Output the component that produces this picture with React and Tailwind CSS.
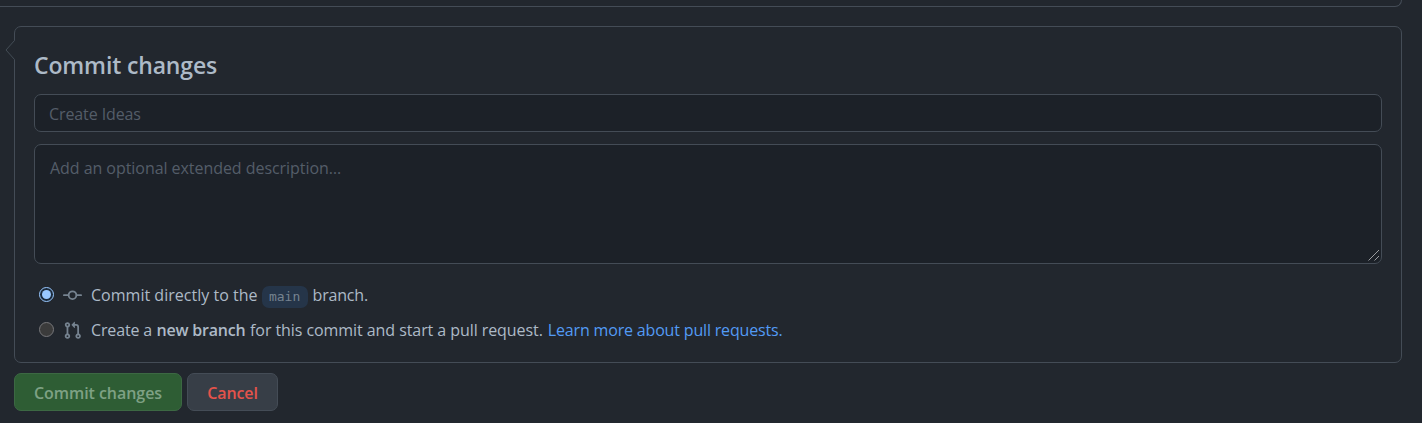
function CommitIcon() {
  return (
    <svg viewBox="0 0 16 16" className="h-[19px] w-[19px] shrink-0 fill-none stroke-[#768390]" strokeWidth="1.5" strokeLinecap="round" aria-hidden="true">
      <circle cx="8" cy="7.75" r="3.25" />
      <path d="M0.75 7.75H4.5M11.5 7.75H15.25" />
    </svg>
  );
}

function PullRequestIcon() {
  return (
    <svg viewBox="0 0 16 16" className="h-[19px] w-[19px] shrink-0 fill-[#768390]" aria-hidden="true">
      <path fillRule="evenodd" d="M7.177 3.073L9.573.677A.25.25 0 0110 .854v4.792a.25.25 0 01-.427.177L7.177 3.427a.25.25 0 010-.354zM3.75 2.5a.75.75 0 100 1.5.75.75 0 000-1.5zm-2.25.75a2.25 2.25 0 113 2.122v5.256a2.251 2.251 0 11-1.5 0V5.372A2.25 2.25 0 011.5 3.25zM11 2.5h-1V4h1a1 1 0 011 1v5.628a2.251 2.251 0 101.5 0V5A2.5 2.5 0 0011 2.5zm1 10.25a.75.75 0 111.5 0 .75.75 0 01-1.5 0zM3.75 12a.75.75 0 100 1.5.75.75 0 000-1.5z" />
    </svg>
  );
}

function Radio({ checked }) {
  return (
    <span
      role="radio"
      aria-checked={checked}
      className={
        checked
          ? "mb-[2px] flex h-[15px] w-[15px] shrink-0 items-center justify-center rounded-full border-[1.5px] border-[#99c8ff] bg-[#1c2b3c]"
          : "mb-[2px] flex h-[15px] w-[15px] shrink-0 rounded-full border-[1.5px] border-[#77777a] bg-[#3b3b3b]"
      }
    >
      {checked && <span className="h-[9px] w-[9px] rounded-full bg-[#99c8ff]" />}
    </span>
  );
}

export default function App() {
  return (
    <div className="h-[423px] overflow-hidden bg-[#22272e] font-['Open_Sans','Noto_Sans',sans-serif] text-[16px] text-[#adbac7]">
      <div className="mr-5 h-[7px] rounded-br-[7px] border-r border-b border-[#444c56]" />

      <section className="relative mt-[19px] mr-5 ml-[14px] h-[337px] rounded-[7px] border border-[#444c56] px-[19px] pt-[22px]">
        <svg viewBox="0 0 10 20" className="absolute top-[13px] -left-[10px] h-5 w-[10px]" aria-hidden="true">
          <path d="M10 0 L1 10 L10 20" className="fill-[#22272e]" />
          <path d="M9.5 0.5 L1 10 L9.5 19.5" className="fill-none stroke-[#444c56]" />
        </svg>
        <h3 className="flex h-8 items-center text-[23px] font-semibold tracking-[-0.15px] whitespace-nowrap"><span>Commit changes</span></h3>
        <div className="mt-[13px] flex h-[38px] items-center rounded-[7px] border border-[#444c56] bg-[#1c2128] px-[15px] pt-[2px] text-[#545d68]">
          <span className="-ml-px tracking-[-0.1px]">Create Ideas</span>
        </div>
        <div className="relative mt-3 h-[120px] rounded-[7px] border border-[#444c56] bg-[#1c2128] px-[15px] pt-[11px] leading-6 text-[#545d68]">
          <span className="tracking-[-0.05px]">Add an optional extended description…</span>
          <svg viewBox="0 0 12 12" className="absolute right-px bottom-[2px] h-3 w-3 fill-none stroke-[#9b9da0]" aria-hidden="true">
            <path d="M0.5 11.5 L11 1 M6.5 11.5 L11 7" />
          </svg>
        </div>
        <div className="mt-[18px] flex h-[26px] items-center pl-[4.5px] whitespace-nowrap">
          <Radio checked />
          <span className="ml-[9px] flex"><CommitIcon /></span>
          <span className="ml-[9.5px] tracking-[0.02px]">Commit directly to the</span>
          <code className="mt-1 ml-1 flex h-[22px] w-[46px] items-center justify-center rounded-[7px] bg-[#253549] font-['DejaVu_Sans_Mono',monospace] text-[13px] text-[#768390]">main</code>
          <span className="ml-[5px] tracking-[-0.2px]">branch.</span>
        </div>
        <div className="mt-[9px] flex h-[26px] items-center pl-[4.5px] whitespace-nowrap">
          <Radio checked={false} />
          <span className="ml-[9px] flex"><PullRequestIcon /></span>
          <span className="ml-[9.5px] tracking-[-0.15px]">Create a</span>
          <strong className="ml-[4.5px] font-semibold tracking-[-0.2px]">new branch</strong>
          <span className="ml-[4.5px] tracking-[-0.07px]">for this commit and start a pull request.</span>
          <a className="ml-[5px] tracking-[-0.17px] text-[#539bf5]">Learn more about pull requests.</a>
        </div>
      </section>

      <div className="mt-[10px] ml-[14px] flex gap-[5px] font-semibold whitespace-nowrap">
        <button className="flex h-[38px] w-[168px] items-center justify-center rounded-[7px] border border-[#3c6843] bg-[#2e5d34] pt-[2px] text-[#7ea184]"><span className="tracking-[-0.05px]">Commit changes</span></button>
        <button className="flex h-[38px] w-[91px] items-center justify-center rounded-[7px] border border-[#444c56] bg-[#373e47] pt-[2px] text-[#e5534b]"><span className="tracking-[-0.1px]">Cancel</span></button>
      </div>
    </div>
  );
}
